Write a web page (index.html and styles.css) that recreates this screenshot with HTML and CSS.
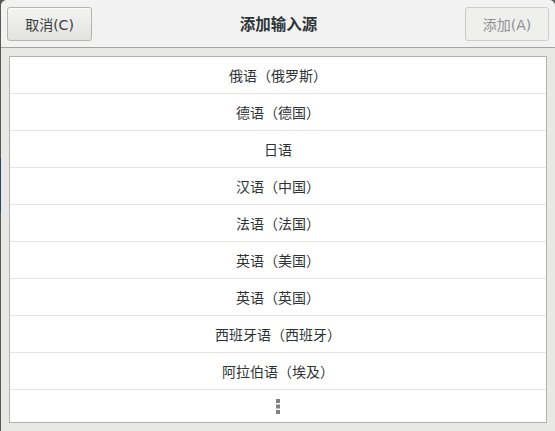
FILE: index.html
```html
<!DOCTYPE html>
<html lang="zh-CN">
<head>
<meta charset="utf-8">
<title>添加输入源</title>
<link rel="stylesheet" href="styles.css">
</head>
<body>
<div class="window">
  <header class="headerbar">
    <button class="btn">取消(C)</button>
    <h1 class="title">添加输入源</h1>
    <button class="btn btn-disabled" disabled>添加(A)</button>
  </header>
  <main class="content">
    <ul class="list">
      <li class="row">俄语（俄罗斯）</li>
      <li class="row">德语（德国）</li>
      <li class="row">日语</li>
      <li class="row">汉语（中国）</li>
      <li class="row">法语（法国）</li>
      <li class="row">英语（美国）</li>
      <li class="row">英语（英国）</li>
      <li class="row">西班牙语（西班牙）</li>
      <li class="row">阿拉伯语（埃及）</li>
      <li class="row row-more">
        <svg class="more" width="4" height="15" viewBox="0 0 4 15">
          <rect x="0" y="0" width="4" height="4"/>
          <rect x="0" y="5.5" width="4" height="4"/>
          <rect x="0" y="11" width="4" height="4"/>
        </svg>
      </li>
    </ul>
  </main>
</div>
</body>
</html>
```

FILE: styles.css
```css
* { box-sizing: border-box; }
html, body {
  margin: 0;
  padding: 0;
  width: 555px;
  height: 431px;
  overflow: hidden;
}
body {
  background: linear-gradient(to bottom, #5a5a5a 0, #5a5a5a 158px, #24456f 158px, #24456f 212px, #5a5a5a 212px);
  font-family: "DejaVu Sans", "Noto Sans CJK SC", sans-serif;
  font-size: 14px;
  color: #2e3436;
}
.window {
  width: 554px;
  height: 431px;
  margin-left: 1px;
  border-radius: 6px 6px 0 0;
  background: #e8e8e7;
  display: flex;
  flex-direction: column;
  overflow: hidden;
}
.headerbar {
  height: 48px;
  flex: none;
  display: flex;
  align-items: flex-start;
  justify-content: space-between;
  padding: 7px 6px 0 6px;
  background: #f2f2f2;
  border-bottom: 1px solid #a3a3a1;
}
.btn {
  height: 34px;
  padding: 0;
  width: 85px;
  font-family: "DejaVu Sans", "Noto Sans CJK SC", sans-serif;
  font-size: 14px;
  font-weight: normal;
  color: #3a3d3e;
  border: 1px solid #b4b4b1;
  border-radius: 3px;
  background: linear-gradient(#f4f4f3, #e2e2e1);
  box-shadow: inset 0 1px #fbfbfb;
}
.btn-disabled {
  width: 84px;
  color: #8f9192;
  background: #efefee;
  border-color: #cdcdcb;
  box-shadow: none;
}
.title {
  margin: 0;
  line-height: 32px;
  font-size: 15.5px;
  font-weight: bold;
  color: #2e3436;
  font-family: "Noto Sans CJK SC", sans-serif;
}
.content {
  flex: 1;
  padding: 8px;
  display: flex;
  flex-direction: column;
}
.list {
  list-style: none;
  margin: 0;
  padding: 0;
  flex: 1;
  background: #ffffff;
  border: 1px solid #b0b0ae;
  display: flex;
  flex-direction: column;
}
.row {
  height: 37px;
  flex: none;
  display: flex;
  align-items: center;
  justify-content: center;
  border-bottom: 1px solid #e3e3e2;
  padding-bottom: 1px;
  font-family: "Noto Sans CJK SC", sans-serif;
  font-size: 14px;
  color: #2e3436;
}
.row-more {
  height: 32px;
  border-bottom: none;
  padding-top: 1px;
}
.more { fill: #808080; display: block; }
```
